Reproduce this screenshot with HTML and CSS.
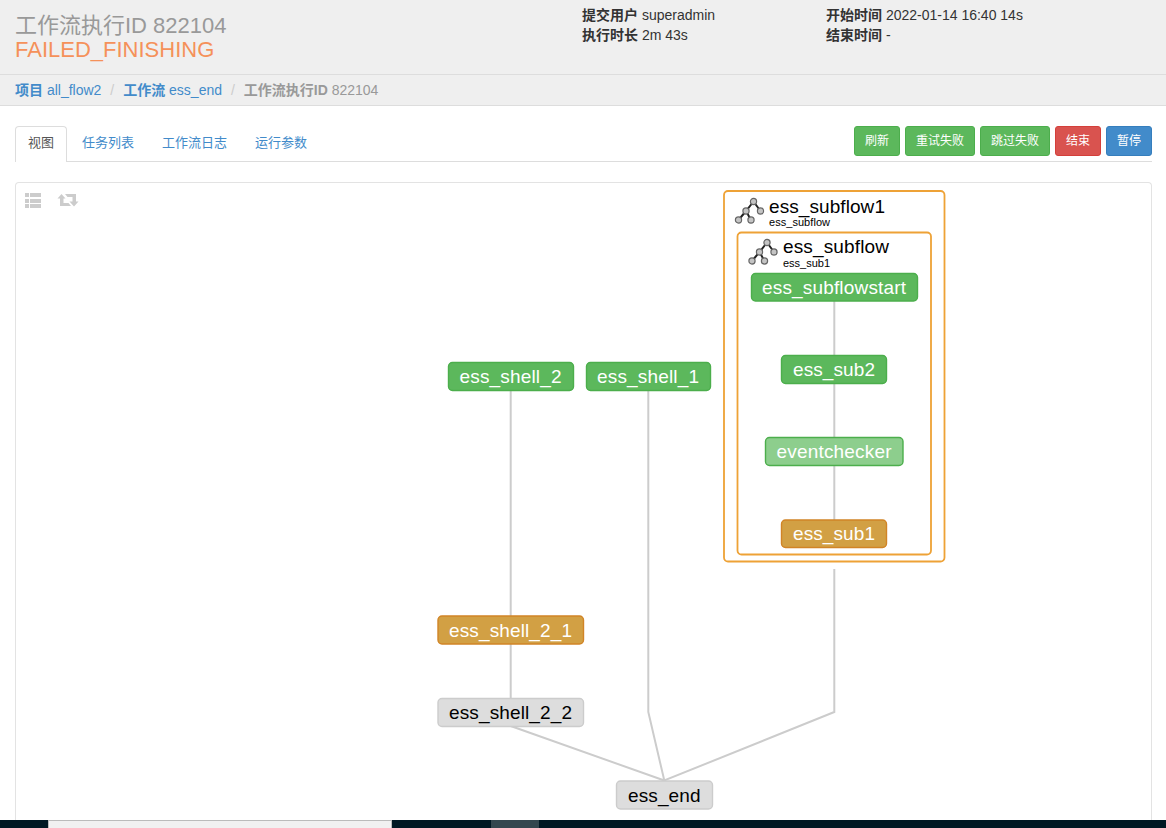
FILE: index.html
```html
<!DOCTYPE html>
<html lang="zh-CN">
<head>
<meta charset="utf-8">
<title>工作流执行ID 822104</title>
<link rel="stylesheet" href="styles.css">
</head>
<body>
<div class="page">
  <header class="page-header">
    <h1 class="title"><span class="title-name">工作流执行ID 822104</span><span class="status">FAILED_FINISHING</span></h1>
    <div class="meta meta-user">
      <div><b>提交用户</b> superadmin</div>
      <div><b>执行时长</b> 2m 43s</div>
    </div>
    <div class="meta">
      <div><b>开始时间</b> 2022-01-14 16:40 14s</div>
      <div><b>结束时间</b> -</div>
    </div>
  </header>
  <nav class="breadcrumb">
    <a><b>项目</b> all_flow2</a><i class="slash">/</i><a><b>工作流</b> ess_end</a><i class="slash">/</i><span class="current"><b>工作流执行ID</b> 822104</span>
  </nav>
  <main class="content">
    <div class="toolbar">
      <div class="tabs">
        <a class="tab active">视图</a><a class="tab">任务列表</a><a class="tab">工作流日志</a><a class="tab">运行参数</a>
      </div>
      <div class="buttons">
        <button class="btn success">刷新</button>
        <button class="btn success">重试失败</button>
        <button class="btn success">跳过失败</button>
        <button class="btn danger">结束</button>
        <button class="btn primary">暂停</button>
      </div>
    </div>
    <section class="panel">
      <svg class="graph" viewBox="16 183 1135 637" width="1135" height="637">
        <defs>
          <g id="flow-icon">
            <path d="M18.5 3.5L11 13L3.5 22M11 13L16 22M18.5 3.5L25.500 13" class="icon-line"/>
            <g class="icon-dot"><circle cx="18.500" cy="3.500" r="3.100"/><circle cx="11" cy="13" r="3.100"/><circle cx="25.500" cy="13" r="3.100"/><circle cx="3.500" cy="22" r="3.100"/><circle cx="16" cy="22" r="3.100"/></g>
          </g>
        </defs>
        <g class="tool-icon">
          <path d="M25 193h4v4h-4zM30 193h11v4H30zM25 199h4v4h-4zM30 199h11v4H30zM25 204h4v4h-4zM30 204h11v4H30z"/>
          <path d="M61.500 194L65.500 198.500H63.500V203H68.500L71 206H60V198.500H57.500zM65 194H76V201.500H78.500L74 206.500L69.500 201.500H72.500V197H67.500z"/>
        </g>
        <g class="subflow">
          <rect x="724" y="191" width="220.500" height="370.500" rx="4"/>
          <rect x="737.500" y="232.500" width="193.500" height="322" rx="4"/>
        </g>
        <g class="edges">
          <path d="M510.700 390V616M510.700 644V698M510.700 726L664.300 780.500M648.300 390V712L664.300 780.500L834.300 712V569M834.300 301V356M834.300 383V438M834.300 465V520"/>
        </g>
        <use href="#flow-icon" x="735" y="198"/>
        <use href="#flow-icon" x="748.500" y="239"/>
        <g class="flow-name"><text x="769" y="213" textLength="116">ess_subflow1</text><text x="783" y="253" textLength="106">ess_subflow</text></g>
        <g class="flow-id"><text x="769" y="226" textLength="61">ess_subflow</text><text x="783" y="267" textLength="47">ess_sub1</text></g>
        <g class="node ok">
          <rect x="448.500" y="362.500" width="125" height="28" rx="4"/><text x="459.500" y="383" textLength="102">ess_shell_2</text>
          <rect x="586.500" y="362.500" width="124" height="28" rx="4"/><text x="597" y="383" textLength="102">ess_shell_1</text>
          <rect x="751.500" y="273.500" width="166" height="27.500" rx="4"/><text x="762" y="294" textLength="144">ess_subflowstart</text>
          <rect x="781.500" y="355.500" width="105" height="28" rx="4"/><text x="793" y="376" textLength="82">ess_sub2</text>
        </g>
        <g class="node skipped"><rect x="765.500" y="437.500" width="137.500" height="28" rx="4"/><text x="776.500" y="458" textLength="115">eventchecker</text></g>
        <g class="node failed">
          <rect x="781.500" y="520" width="105" height="27.500" rx="4"/><text x="793" y="540" textLength="82">ess_sub1</text>
          <rect x="438" y="616" width="145.500" height="28" rx="4"/><text x="449" y="637" textLength="123">ess_shell_2_1</text>
        </g>
        <g class="node waiting">
          <rect x="438" y="698.500" width="145.500" height="28" rx="4"/><text x="449" y="719" textLength="123">ess_shell_2_2</text>
          <rect x="616.500" y="781" width="96" height="28" rx="4"/><text x="628" y="802" textLength="72.500">ess_end</text>
        </g>
      </svg>
    </section>
  </main>
  <footer class="taskbar"><div class="search"></div><div class="task"></div></footer>
</div>
</body>
</html>
```
FILE: styles.css
```css
* { box-sizing: border-box; }
body {
  margin: 0;
  font: 14px/20px "Liberation Sans", "Noto Sans CJK SC", sans-serif;
  color: #333;
  background: #fff;
}
.page { height: 828px; display: flex; flex-direction: column; overflow: hidden; }
.page-header {
  height: 75px;
  padding: 5px 15px 0;
  display: flex;
  flex: none;
  background: #efefef;
  border-bottom: 1px solid #ddd;
}
.title { width: 567px; margin: 9px 0 0; font-size: 22px; line-height: 24px; font-weight: 400; }
.title-name, .status { display: block; height: 24px; }
.title-name { color: #999; }
.status { color: #f5915a; }
.meta-user { width: 244px; }
.breadcrumb {
  height: 31px;
  flex: none;
  display: flex;
  padding: 5px 15px;
  background: #efefef;
  border-bottom: 1px solid #ddd;
  color: #428bca;
  white-space: nowrap;
}
.slash { width: 21.8px; text-align: center; color: #ccc; font-style: normal; }
.current { color: #999; }
.content { flex: 1; min-height: 0; padding: 20px 14px 0 15px; display: flex; flex-direction: column; }
.toolbar {
  height: 36px;
  flex: none;
  display: flex;
  justify-content: space-between;
  border-bottom: 1px solid #ddd;
}
.tabs { display: flex; gap: 2px; }
.tab {
  height: 36px;
  padding: 6px 12px;
  border: 1px solid transparent;
  border-bottom: 0;
  border-radius: 4px 4px 0 0;
  font-size: 13px;
  color: #428bca;
}
.tab.active { color: #555; background: #fff; border-color: #ddd; }
.buttons { display: flex; gap: 5px; }
.btn {
  height: 30px;
  margin: 0;
  padding: 5px 10px;
  border: 1px solid;
  border-radius: 3px;
  font: 12px/18px "Liberation Sans", "Noto Sans CJK SC", sans-serif;
  color: #fff;
}
.success { background: #5cb85c; border-color: #4cae4c; }
.danger { background: #d9534f; border-color: #d43f3a; }
.primary { background: #428bca; border-color: #357ebd; }
.panel {
  margin-top: 20px;
  flex: 1;
  min-height: 0;
  overflow: hidden;
  border: 1px solid #e3e3e3;
  border-bottom: 0;
  border-radius: 4px 4px 0 0;
}
.graph { display: block; font-family: "Liberation Sans", sans-serif; }
.tool-icon { fill: #ccc; }
.edges { fill: none; stroke: #ccc; stroke-width: 2; }
.subflow { fill: #fff; stroke: #eea236; stroke-width: 1.8; }
.icon-line { fill: none; stroke: #222; stroke-width: 2; }
.icon-dot { fill: #c4c4c4; stroke: #666; stroke-width: 1.2; }
.flow-name, .node { font-size: 19px; }
.flow-id { font-size: 11px; }
.node rect { stroke-width: 1.4; }
.ok rect { fill: #5cb85c; stroke: #4cae4c; }
.skipped rect { fill: #8dce8d; stroke: #4cae4c; }
.failed rect { fill: #d2a044; stroke: #d18426; }
.waiting rect { fill: #ddd; stroke: #ccc; }
.node text { fill: #fff; }
.waiting text { fill: #000; }
.taskbar { height: 8px; flex: none; display: flex; background: #001823; }
.search { width: 344px; margin-left: 48px; background: #f1f1f1; border: 1px solid #bbb; border-bottom: 0; }
.task { width: 48px; margin-left: 99px; background: #34474f; }
```
